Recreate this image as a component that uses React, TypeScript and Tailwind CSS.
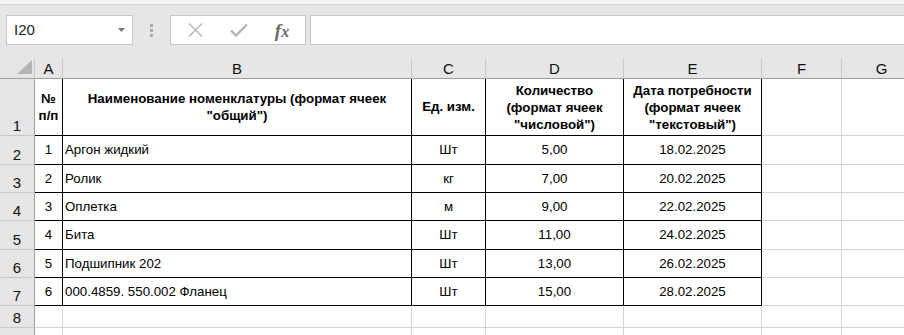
import React from "react";

const cols = "grid grid-cols-[35px_28px_349px_74px_138px_138px_80px_80px]";

const headCell =
  "flex items-center justify-center border-r border-b border-r-[#c8c8c8] border-b-[#9e9e9e] bg-[#e6e6e6] text-[15px] leading-none text-[#111]";
const rowHead =
  "flex items-end justify-center border-r border-b border-r-[#9e9e9e] border-b-[#c8c8c8] bg-[#e6e6e6] text-[15px] leading-[18px] text-[#111]";
const boxed = "flex items-center border-r border-b border-black text-[13.3px] text-black";
const grid = "border-r border-b border-[#d4d4d4]";

const items = [
  { n: "2", no: "1", name: "Аргон жидкий", unit: "Шт", qty: "5,00", date: "18.02.2025", h: "h-[29px]" },
  { n: "3", no: "2", name: "Ролик", unit: "кг", qty: "7,00", date: "20.02.2025", h: "h-[28px]" },
  { n: "4", no: "3", name: "Оплетка", unit: "м", qty: "9,00", date: "22.02.2025", h: "h-[28px]" },
  { n: "5", no: "4", name: "Бита", unit: "Шт", qty: "11,00", date: "24.02.2025", h: "h-[29px]" },
  { n: "6", no: "5", name: "Подшипник 202", unit: "Шт", qty: "13,00", date: "26.02.2025", h: "h-[28px]" },
  { n: "7", no: "6", name: "000.4859. 550.002 Фланец", unit: "Шт", qty: "15,00", date: "28.02.2025", h: "h-[28px]" },
];

function FormulaBar() {
  return (
    <div className="h-[58px] bg-[#e6e6e6]">
      <div className="h-[5px] border-b border-[#d4d4d4] bg-[#f4f4f4]" />
      <div className="mt-[10px] flex h-[30px] items-stretch">
        <div className="ml-[6px] flex w-[127px] items-center justify-between border border-[#c6c6c6] bg-white pl-[7px] pr-[7px]">
          <span className="text-[15px] text-[#222]">I20</span>
          <svg width="7" height="4" viewBox="0 0 7 4">
            <path d="M0 0h7L3.5 4z" fill="#777" />
          </svg>
        </div>
        <div className="flex w-[37px] flex-col items-center justify-center gap-[2px]">
          <span className="h-[3px] w-[3px] bg-[#a9a9a9]" />
          <span className="h-[3px] w-[3px] bg-[#a9a9a9]" />
          <span className="h-[3px] w-[3px] bg-[#a9a9a9]" />
        </div>
        <div className="flex w-[136px] items-center border border-[#c6c6c6] bg-white">
          <div className="flex w-[47px] justify-center pl-[2px]">
            <svg width="15" height="14" viewBox="0 0 15 14">
              <path d="M1 0.5l13 13M14 0.5l-13 13" stroke="#b4b4b4" strokeWidth="1.4" fill="none" />
            </svg>
          </div>
          <div className="flex w-[42px] justify-center">
            <svg width="18" height="14" viewBox="0 0 18 14">
              <path d="M1 7.5l5 5L17 1.5" stroke="#b4b4b4" strokeWidth="2.4" fill="none" />
            </svg>
          </div>
          <div className="flex w-[44px] justify-center">
            <span className="font-['Liberation_Serif',serif] text-[19px] font-semibold italic leading-none text-[#6a6a6a]">
              f<span className="text-[16px]">x</span>
            </span>
          </div>
        </div>
        <div className="ml-[4px] -mr-[2px] flex-1 border border-[#c6c6c6] bg-white" />
      </div>
    </div>
  );
}

export default function App() {
  return (
    <div className="h-[335px] w-[904px] overflow-hidden bg-white font-['Liberation_Sans',Arial,sans-serif]">
      <FormulaBar />
      <div className={cols}>
        <div className="flex h-[21px] items-end justify-end border-r border-b border-r-[#c8c8c8] border-b-[#9e9e9e] bg-[#e6e6e6] pb-[4px] pr-[2px]">
          <svg width="15" height="14" viewBox="0 0 15 14">
            <path d="M15 0v14H0z" fill="#b5b5b5" />
          </svg>
        </div>
        {["A", "B", "C", "D", "E", "F", "G"].map((c) => (
          <div key={c} className={`${headCell} h-[21px] pt-[1px]`}>
            {c}
          </div>
        ))}

        <div className={`${rowHead} h-[57px]`}>1</div>
        <div className={`${boxed} justify-center text-center font-bold leading-[17px]`}>
          №<br />п/п
        </div>
        <div className={`${boxed} justify-center text-center font-bold leading-[17px]`}>
          Наименование номенклатуры (формат ячеек
          <br />
          "общий")
        </div>
        <div className={`${boxed} justify-center font-bold`}>Ед. изм.</div>
        <div className={`${boxed} justify-center text-center font-bold leading-[17px]`}>
          Количество
          <br />
          (формат ячеек
          <br />
          "числовой")
        </div>
        <div className={`${boxed} justify-center text-center font-bold leading-[17px]`}>
          Дата потребности
          <br />
          (формат ячеек
          <br />
          "текстовый")
        </div>
        <div className={grid} />
        <div className={grid} />

        {items.map((r) => (
          <React.Fragment key={r.n}>
            <div className={`${rowHead} ${r.h}`}>{r.n}</div>
            <div className={`${boxed} justify-center`}>{r.no}</div>
            <div className={`${boxed} pl-[2px]`}>{r.name}</div>
            <div className={`${boxed} justify-center`}>{r.unit}</div>
            <div className={`${boxed} justify-center`}>{r.qty}</div>
            <div className={`${boxed} justify-center`}>{r.date}</div>
            <div className={grid} />
            <div className={grid} />
          </React.Fragment>
        ))}

        {["8", "9"].map((n) => (
          <React.Fragment key={n}>
            <div className={`${rowHead} h-[22px]`}>{n}</div>
            {[0, 1, 2, 3, 4, 5, 6].map((i) => (
              <div key={i} className={grid} />
            ))}
          </React.Fragment>
        ))}
      </div>
    </div>
  );
}
